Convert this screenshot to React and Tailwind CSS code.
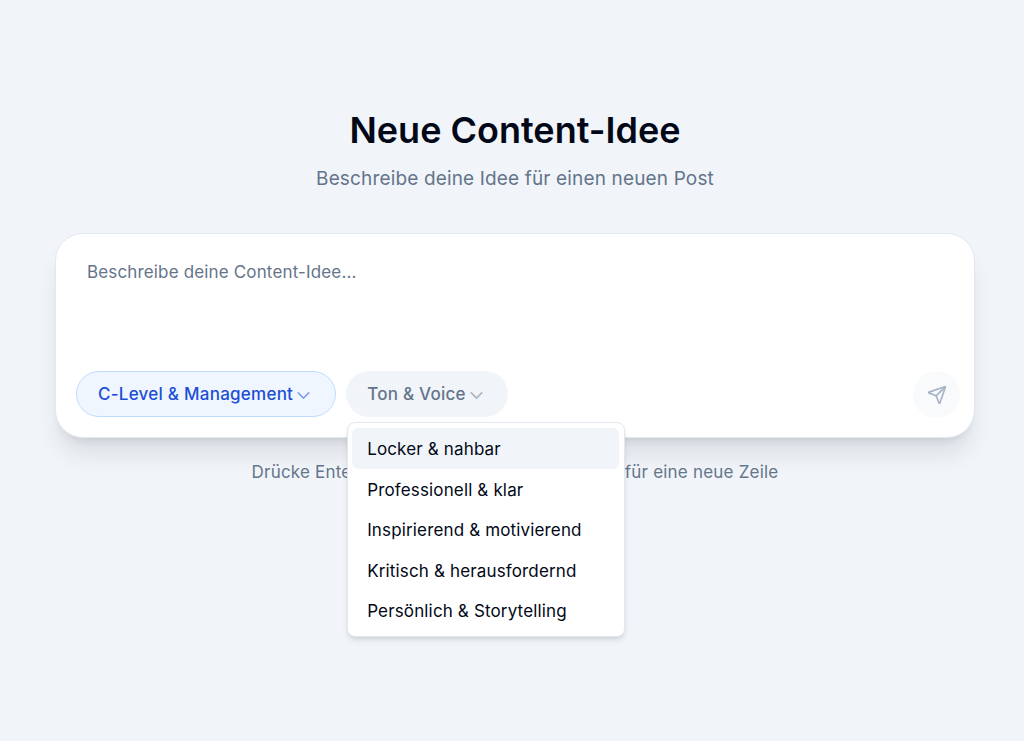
import React from "react";
import { ChevronDown, Send } from "lucide-react";

const tones = [
  "Locker & nahbar",
  "Professionell & klar",
  "Inspirierend & motivierend",
  "Kritisch & herausfordernd",
  "Persönlich & Storytelling",
];

export default function App() {
  return (
    <div className="min-h-screen bg-[#f1f5f9] font-['Inter',sans-serif] tracking-[0.15px] flex flex-col items-center pt-[106px] pl-[6px]">
      <h1 className="text-[36px] leading-[48px] font-semibold text-[#020817] tracking-normal">Neue Content-Idee</h1>
      <p className="mt-[10px] text-[19px] leading-[29px] text-[#64748b]">Beschreibe deine Idee für einen neuen Post</p>

      <div className="mt-[40px] w-[920px] h-[205px] bg-white border border-[#e2e8f0] rounded-[28px] shadow-[0_20px_25px_-5px_rgba(15,23,42,0.1),0_8px_10px_-6px_rgba(15,23,42,0.1)] pl-[20px] pr-[14px] pt-[24px] pb-[19px] flex flex-col">
        <textarea
          placeholder="Beschreibe deine Content-Idee..."
          className="flex-1 w-full resize-none bg-transparent outline-none px-[11px] text-[17px] leading-[28px] text-[#020817] placeholder:text-[#64748b]"
        />
        <div className="flex items-start gap-[10px]">
          <button className="h-[46px] px-[21px] pt-[2px] rounded-full bg-[#eff6ff] border border-[#bfdbfe] text-[#1d4ed8] text-[17px] tracking-[0.25px] font-medium flex items-center">
            C-Level &amp; Management
            <ChevronDown className="w-[21px] h-[21px] opacity-50" strokeWidth={1.75} />
          </button>
          <div className="relative">
            <button className="h-[46px] px-[21px] pt-[2px] rounded-full bg-[#f1f5f9] text-[#64748b] text-[17px] tracking-[0.25px] font-medium flex items-center">
              Ton &amp; Voice
              <ChevronDown className="w-[21px] h-[21px] opacity-50" strokeWidth={1.75} />
            </button>
            <div className="absolute left-[1px] top-[51px] z-10 w-[278px] bg-white border border-[#e2e8f0] rounded-[8px] shadow-md py-[5px] pl-[4px] pr-[5px]">
              {tones.map((t) => (
                <div
                  key={t}
                  className="h-[40.6px] px-[15px] pt-[3px] flex items-center rounded-[6px] text-[17px] text-[#020817] first:bg-[#f1f5f9]"
                >
                  {t}
                </div>
              ))}
            </div>
          </div>
          <button className="ml-auto w-[47px] h-[47px] rounded-full bg-[#f8fafc] flex items-center justify-center text-[#94a3b8]">
            <Send className="w-5 h-5 opacity-80" />
          </button>
        </div>
      </div>

      <p className="mt-[22px] text-[17px] leading-[24px] tracking-[0.2px] text-[#64748b]">Drücke Enter zum Senden, oder Shift + Enter für eine neue Zeile</p>
    </div>
  );
}
